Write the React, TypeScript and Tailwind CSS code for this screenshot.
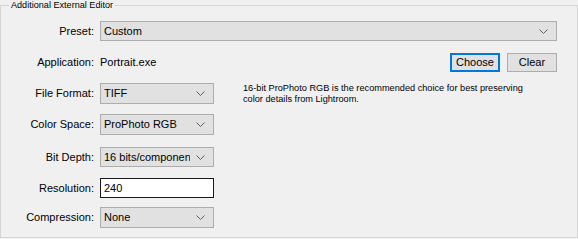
import type { ReactNode } from 'react'

type RowProps = {
  label: string
  className: string
  children: ReactNode
}

function Row({ label, className, children }: RowProps) {
  return (
    <div className={`grid grid-cols-[93px_457px] items-center gap-x-[6px] ${className}`}>
      <span className="text-right">{label}</span>
      <div className="flex items-center">{children}</div>
    </div>
  )
}

function Chevron() {
  return (
    <svg width="9" height="5" viewBox="0 0 9 5" className="shrink-0">
      <polyline points="0.5,0.5 4.5,4.5 8.5,0.5" fill="none" stroke="#606060" strokeWidth="1" />
    </svg>
  )
}

function Combo({ value, width, height }: { value: string; width: string; height: string }) {
  return (
    <div
      className={`flex ${width} ${height} items-center justify-between border border-[#adadad] bg-[#e1e1e1] pl-[3px] pr-[8px]`}
    >
      <span className="w-[86px] overflow-hidden whitespace-nowrap">{value}</span>
      <Chevron />
    </div>
  )
}

export default function App() {
  return (
    <div className="h-[239px] w-[578px] bg-[#f0f0f0] font-['Liberation_Sans',Arial,sans-serif] text-[11px] text-black">
      <fieldset className="m-0 h-[238px] w-[578px] border border-[#d5d5d5] p-0">
        <legend className="ml-[8px] px-[2px] text-[9.1px] leading-[11px]">Additional External Editor</legend>

        <Row label="Preset:" className="mt-[10px] h-[20px]">
          <Combo value="Custom" width="w-[457px]" height="h-[20px]" />
        </Row>

        <Row label="Application:" className="mt-[12px] h-[19px]">
          <span>Portrait.exe</span>
          <div className="ml-auto flex gap-[7px]">
            <button
              type="button"
              className="h-[19px] w-[50px] border-2 border-[#0078d7] bg-[#e1e1e1] leading-[15px]"
            >
              Choose
            </button>
            <button
              type="button"
              className="h-[19px] w-[50px] border border-[#adadad] bg-[#e1e1e1] leading-[17px]"
            >
              Clear
            </button>
          </div>
        </Row>

        <Row label="File Format:" className="mt-[10px] h-[21px]">
          <Combo value="TIFF" width="w-[114px]" height="h-[21px]" />
          <p className="ml-[29px] self-start pt-[1px] text-[9.2px] leading-[11px]">
            16-bit ProPhoto RGB is the recommended choice for best preserving
            <br />
            color details from Lightroom.
          </p>
        </Row>

        <Row label="Color Space:" className="mt-[11px] h-[21px]">
          <Combo value="ProPhoto RGB" width="w-[114px]" height="h-[21px]" />
        </Row>

        <Row label="Bit Depth:" className="mt-[12px] h-[20px]">
          <Combo value="16 bits/component" width="w-[114px]" height="h-[20px]" />
        </Row>

        <Row label="Resolution:" className="mt-[11px] h-[20px]">
          <div className="flex h-[20px] w-[114px] items-center border border-[#1a1a1a] bg-white pl-[3px]">240</div>
        </Row>

        <Row label="Compression:" className="mt-[9px] h-[21px]">
          <Combo value="None" width="w-[114px]" height="h-[21px]" />
        </Row>
      </fieldset>
    </div>
  )
}
